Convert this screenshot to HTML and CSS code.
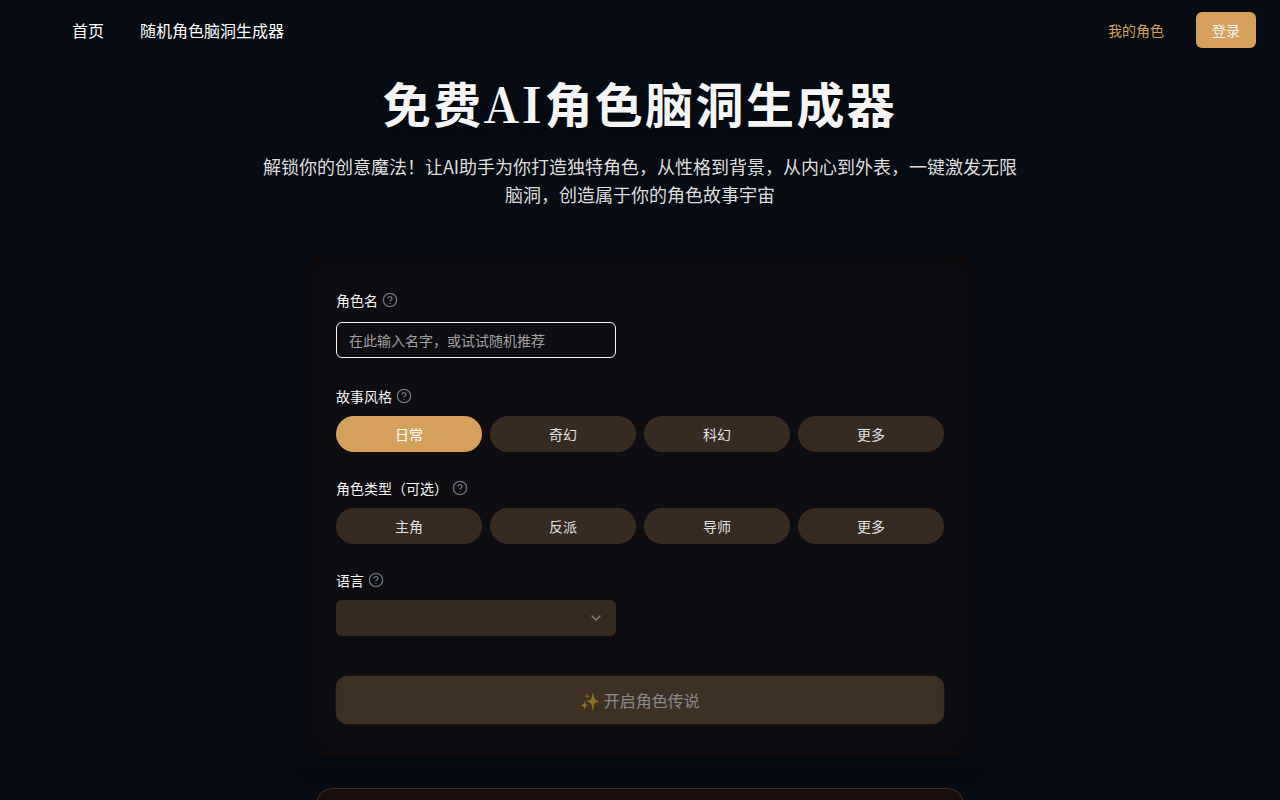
FILE: index.html
```html
<!DOCTYPE html>
<html lang="zh-CN">
<head>
  <meta charset="UTF-8">
  <meta name="viewport" content="width=device-width, initial-scale=1.0">
  <title>免费AI角色脑洞生成器</title>
  <link rel="stylesheet" href="styles.css">
</head>
<body>
  <header class="navbar">
    <nav class="menu">
      <a href="#">首页</a>
      <a href="#">随机角色脑洞生成器</a>
    </nav>
    <div class="user">
      <a href="#" class="mychar">我的角色</a>
      <button type="button" class="loginbtn">登录</button>
    </div>
  </header>
  <main>
    <section class="intro">
      <h1>免费<span class="latin">AI</span>角色脑洞生成器</h1>
      <p>解锁你的创意魔法！让AI助手为你打造独特角色，从性格到背景，从内心到外表，一键激发无限脑洞，创造属于你的角色故事宇宙</p>
    </section>

    <!-- 图标 -->
    <svg class="sprite" aria-hidden="true">
      <symbol id="help" viewBox="0 0 24 24">
        <circle cx="12" cy="12" r="10"/>
        <path d="M9.09 9a3 3 0 0 1 5.83 1c0 2-3 3-3 3"/>
        <path d="M12 17h.01"/>
      </symbol>
    </svg>

    <form action="#" class="card">
      <div class="field namebox">
        <div class="title">
          <label for="name">角色名</label>
          <svg class="help"><use href="#help"/></svg>
        </div>
        <input type="text" name="name" id="name" placeholder="在此输入名字，或试试随机推荐">
      </div>

      <div class="field">
        <div class="title">
          <span id="stylelabel">故事风格</span>
          <svg class="help"><use href="#help"/></svg>
        </div>
        <div class="options" role="group" aria-labelledby="stylelabel">
          <button type="button" class="active">日常</button>
          <button type="button">奇幻</button>
          <button type="button">科幻</button>
          <button type="button">更多</button>
        </div>
      </div>

      <div class="field">
        <div class="title">
          <span id="typelabel">角色类型（可选）</span>
          <svg class="help"><use href="#help"/></svg>
        </div>
        <div class="options" role="group" aria-labelledby="typelabel">
          <button type="button">主角</button>
          <button type="button">反派</button>
          <button type="button">导师</button>
          <button type="button">更多</button>
        </div>
      </div>

      <div class="field">
        <div class="title">
          <label for="lang">语言</label>
          <svg class="help"><use href="#help"/></svg>
        </div>
        <div class="selectbox">
          <select name="lang" id="lang">
            <option value=""></option>
          </select>
          <svg class="arrow" viewBox="0 0 24 24"><path d="m6 9 6 6 6-6"/></svg>
        </div>
      </div>

      <button type="submit" class="startbtn" disabled>✨ 开启角色传说</button>
    </form>

    <section class="result"></section>
  </main>
</body>
</html>
```
FILE: styles.css
```css
*{
  box-sizing: border-box;
}
body{
  margin: 0;
  height: 100vh;
  overflow: hidden;
  font-family: "Noto Sans CJK SC", sans-serif;
  font-size: 14px;
  line-height: 20px;
  color: #f5f5f5;
  background: linear-gradient(#070b13, #080d15 60%, #070b13);
}
a{
  text-decoration: none;
}
button, input, select{
  font: inherit;
}
.navbar{
  display: flex;
  justify-content: space-between;
  align-items: center;
  height: 60px;
  padding: 0 24px 0 72px;
}
.menu{
  display: flex;
  gap: 36px;
}
.menu a{
  font-size: 16px;
  line-height: 24px;
  color: #fff;
}
.user{
  display: flex;
  align-items: center;
  gap: 32px;
}
.mychar{
  color: #d4a05c;
}
.loginbtn{
  height: 36px;
  padding: 0 16px;
  border: 0;
  border-radius: 6px;
  color: #f5f5f5;
  background: #d4a05c;
}
main{
  padding: 12px 16px;
}
.intro{
  max-width: 768px;
  margin: 0 auto;
  text-align: center;
}
.intro h1{
  margin: 0 0 20px;
  font-family: "Noto Sans CJK SC", sans-serif;
  font-size: 48px;
  line-height: 60px;
  font-weight: 700;
  letter-spacing: 0.05em;
  text-shadow: 0 4px 8px rgba(0, 0, 0, .3);
}
.latin{
  font-family: "Noto Serif CJK SC", "Liberation Serif", serif;
  line-height: 48px;
}
.intro p{
  margin: 0;
  font-size: 18px;
  line-height: 28px;
  color: #dddddd;
}
.sprite{
  display: none;
}
.card{
  max-width: 672px;
  margin: 48px auto 0;
  padding: 32px;
  border-radius: 16px;
  background: #0e0d12;
  box-shadow: 0 8px 32px rgba(0, 0, 0, .1), inset 0 0 32px #0f0b0d;
}
.field{
  margin-bottom: 24px;
}
.namebox{
  margin-bottom: 26px;
}
.title{
  display: flex;
  align-items: center;
  gap: 4px;
  height: 24px;
  margin-bottom: 8px;
}
.namebox .title{
  margin-bottom: 10px;
}
.help{
  width: 16px;
  height: 16px;
  fill: none;
  stroke: #6b7280;
  stroke-width: 2;
  stroke-linecap: round;
  stroke-linejoin: round;
}
#name{
  display: block;
  width: 280px;
  height: 36px;
  padding: 0 12px;
  border: 1px solid #f5f5f5;
  border-radius: 6px;
  color: #f5f5f5;
  background: transparent;
}
#name::placeholder{
  color: #a0a0a0;
}
.options{
  display: grid;
  grid-template-columns: repeat(4, 1fr);
  gap: 8px;
}
.options button{
  height: 36px;
  border: 0;
  border-radius: 18px;
  color: #e0e0e0;
  background: #372a21;
}
.options .active{
  color: #fff;
  background: #d4a05c;
}
.selectbox{
  position: relative;
  width: 280px;
}
#lang{
  display: block;
  width: 100%;
  height: 36px;
  padding: 0 12px;
  border: 0;
  border-radius: 6px;
  appearance: none;
  color: #e0e0e0;
  background: #372a21;
}
.arrow{
  position: absolute;
  top: 10px;
  right: 12px;
  width: 16px;
  height: 16px;
  fill: none;
  stroke: #8d857f;
  stroke-width: 2;
  stroke-linecap: round;
  stroke-linejoin: round;
  pointer-events: none;
}
.startbtn{
  display: block;
  width: 100%;
  height: 48px;
  margin-top: 40px;
  border: 0;
  border-radius: 12px;
  font-size: 16px;
  color: #fff;
  background: #6e5433;
  box-shadow: 0 0 2px #6e5433;
  opacity: .5;
}
.result{
  max-width: 648px;
  height: 320px;
  margin: 32px auto 0;
  border: 1px solid #442c1b;
  border-radius: 16px;
  background: #190e0d;
}
```
